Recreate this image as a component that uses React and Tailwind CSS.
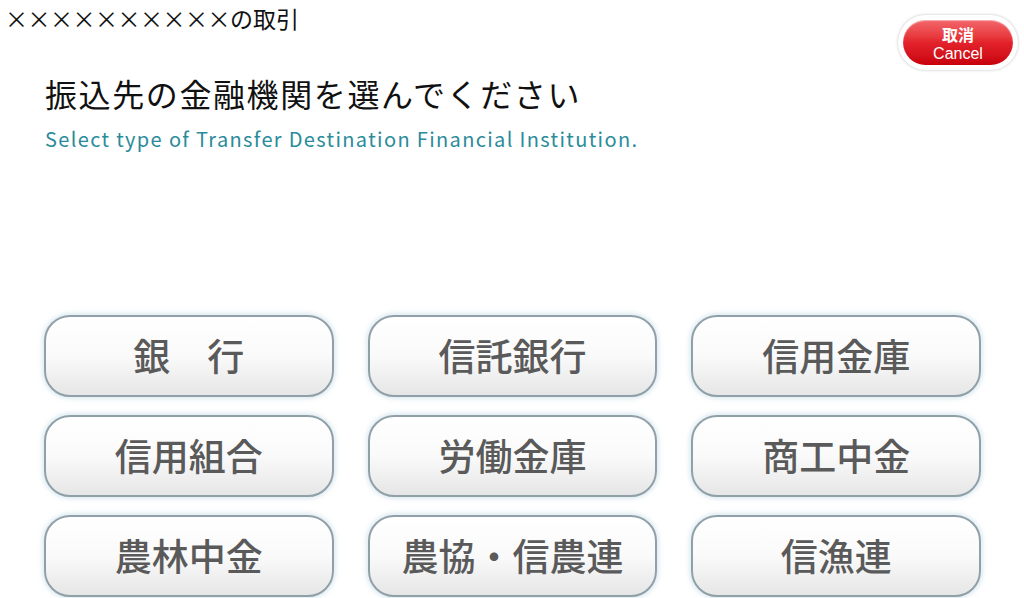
import React from 'react';

const items = [
  '銀　行', '信託銀行', '信用金庫',
  '信用組合', '労働金庫', '商工中金',
  '農林中金', '農協・信農連', '信漁連',
];

const jp = { fontFamily: '"Noto Sans CJK JP", "Noto Sans", sans-serif' };

export default function App() {
  return (
    <div className="relative w-[1024px] h-[598px] overflow-hidden bg-white" style={jp}>
      {/* header */}
      <div className="flex items-start justify-between">
        <div className="pl-[5px] pt-[1px] text-[23px] leading-[34px] text-[#111]">
          <span className="tracking-[-0.5px]">××××××××××</span>の取引
        </div>
        <div className="mt-[15px] mr-[6px] rounded-full bg-white p-[5px] shadow-[0_0_3px_rgba(0,0,0,0.25)]">
          <button className="flex h-[45px] w-[110px] flex-col items-center justify-center rounded-full bg-gradient-to-b from-[#f2656b] via-[#e3222b] to-[#c8000b] pt-[2px] text-white shadow-[inset_0_1px_1px_rgba(255,255,255,0.5)]">
            <span className="text-[16px] font-bold leading-[20px]">取消</span>
            <span className="text-[16px] leading-[20px]" style={{ fontFamily: '"Liberation Sans", Arial, sans-serif' }}>Cancel</span>
          </button>
        </div>
      </div>

      {/* title */}
      <div className="pl-[45px] mt-[1px]">
        <h1 className="text-[32px] leading-[44px] text-[#111] tracking-[1.6px]">振込先の金融機関を選んでください</h1>
        <p className="mt-[10px] text-[20px] leading-[28px] text-[#2a8b9b] tracking-[1.35px]">
          Select type of Transfer Destination Financial Institution.
        </p>
      </div>

      {/* options */}
      <div className="mt-[162px] ml-[44px] grid w-[937px] grid-cols-3 gap-x-[34px] gap-y-[18px]">
        {items.map((t) => (
          <button
            key={t}
            className="h-[82px] rounded-[26px] border-2 border-[#8fa0a8] bg-gradient-to-b from-white via-[#fafafa] to-[#e6e6e6] text-[37px] font-medium text-[#5a5a5a] shadow-[0_0_4px_2px_rgba(190,215,230,0.5)]"
            style={jp}
          >
            {t}
          </button>
        ))}
      </div>
    </div>
  );
}
